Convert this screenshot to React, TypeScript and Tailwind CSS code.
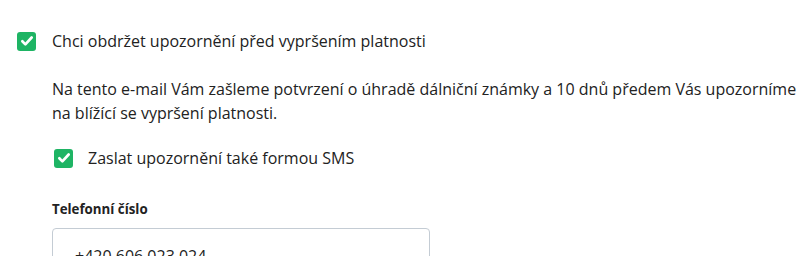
import React from "react";

function Check({ className = "" }: { className?: string }) {
  return (
    <span className={`flex h-[19px] w-[19px] shrink-0 items-center justify-center rounded-[3px] bg-[#1eb464] ${className}`}>
      <svg width="14" height="14" viewBox="0 0 24 24" fill="none">
        <path d="M4 12.5l5.2 5.2L20 6" stroke="white" strokeWidth="4.6" strokeLinecap="round" strokeLinejoin="round" />
      </svg>
    </span>
  );
}

export default function App() {
  return (
    <div className="h-[256px] w-[808px] overflow-hidden bg-white font-['Open_Sans',sans-serif] text-[#222]">
      <label className="flex items-center gap-4 pl-[17px] pt-[31px] text-base leading-[20px]">
        <Check />
        <span>Chci obdržet upozornění před vypršením platnosti</span>
      </label>
      <div className="pl-[52px]">
        <p className="mt-[26px] w-[752px] text-base leading-6">
          Na tento e-mail Vám zašleme potvrzení o úhradě dálniční známky a 10 dnů předem Vás upozorníme na blížící se vypršení platnosti.
        </p>
        <label className="mt-[23px] flex items-center gap-[15px] pl-[2px] text-base leading-[20px]">
          <Check />
          <span>Zaslat upozornění také formou SMS</span>
        </label>
        <div className="mt-[31px] text-[13.3px] font-bold leading-5">Telefonní číslo</div>
        <div className="mt-[9px] h-[56px] w-[378px] rounded-[4px] border border-[#c4ccd4] px-[22px] pt-[15px] text-base leading-6">
          +420 606 023 024
        </div>
      </div>
    </div>
  );
}
